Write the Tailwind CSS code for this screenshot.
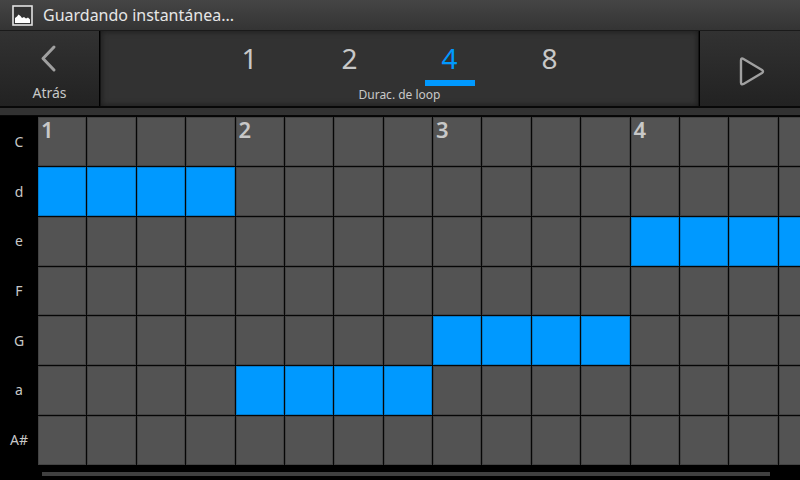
<!DOCTYPE html>
<html lang="es">
<head>
  <meta charset="UTF-8" />
  <meta name="viewport" content="width=device-width, initial-scale=1.0" />
  <title>Secuenciador</title>
  <script src="https://cdn.jsdelivr.net/npm/@tailwindcss/browser@4"></script>
</head>
<body class="h-screen flex flex-col overflow-hidden bg-black font-['Noto_Sans',sans-serif] text-[#c8c8c8]">
  <!-- Barra de estado -->
  <header class="flex items-center gap-2.5 h-[31px] shrink-0 px-3 bg-linear-to-b from-[#454545] to-[#343434] border-b border-[#1a1a1a] text-[#e6e6e6]">
    <svg class="w-[21px] h-[21px]" viewBox="0 0 21 21" fill="none">
      <rect x="1" y="1" width="19" height="19" fill="#333" stroke="#e2e2e2" stroke-width="1.6" />
      <path d="M3 18V13L5 11.500L6.500 9.500L8.500 11L10 13L12 12L14 13.500L16 12.500L18 14.500V18Z" fill="#fff" />
    </svg>
    <p class="text-base leading-6">Guardando instantánea...</p>
  </header>

  <nav class="flex h-[75px] shrink-0 bg-linear-to-b from-[#323232] to-[#222222]">
    <button type="button" class="flex flex-col items-center w-25 pt-3 border-r border-black text-sm leading-5">
      <svg class="w-5 h-[30px] mb-2.5" viewBox="0 0 20 30" fill="none" stroke="#a0a0a0" stroke-width="3" stroke-linecap="round" stroke-linejoin="round">
        <path d="M14 4L3 15.500L14 27" />
      </svg>
      Atrás
    </button>

    <div role="radiogroup" aria-labelledby="loopLabel" class="flex-1 flex flex-col items-center border-x border-[#151515] bg-[#323232] shadow-[inset_0_0_6px_#1a1a1a]">
      <div class="flex pt-[7px]">
        <label class="flex flex-col items-center w-25 text-[28px] leading-10">
          <input type="radio" name="loop" value="1" class="peer sr-only">
          <span class="peer-checked:text-[#0099ff]">1</span>
          <span class="w-[50px] h-1.5 mt-0.5 peer-checked:bg-[#0099ff]"></span>
        </label>
        <label class="flex flex-col items-center w-25 text-[28px] leading-10">
          <input type="radio" name="loop" value="2" class="peer sr-only">
          <span class="peer-checked:text-[#0099ff]">2</span>
          <span class="w-[50px] h-1.5 mt-0.5 peer-checked:bg-[#0099ff]"></span>
        </label>
        <label class="flex flex-col items-center w-25 text-[28px] leading-10">
          <input type="radio" name="loop" value="4" class="peer sr-only" checked>
          <span class="peer-checked:text-[#0099ff]">4</span>
          <span class="w-[50px] h-1.5 mt-0.5 peer-checked:bg-[#0099ff]"></span>
        </label>
        <label class="flex flex-col items-center w-25 text-[28px] leading-10">
          <input type="radio" name="loop" value="8" class="peer sr-only">
          <span class="peer-checked:text-[#0099ff]">8</span>
          <span class="w-[50px] h-1.5 mt-0.5 peer-checked:bg-[#0099ff]"></span>
        </label>
      </div>
      <p id="loopLabel" class="text-xs leading-4.5">Durac. de loop</p>
    </div>

    <button type="button" aria-label="Reproducir" class="flex items-center justify-center w-[101px] pl-1 pt-1 border-l border-black">
      <svg class="w-7 h-8" viewBox="0 0 28 32" fill="#1f1f1f" stroke="#a0a0a0" stroke-width="2.4" stroke-linejoin="round">
        <path d="M3 5.500Q3 2.500 5.500 4L24 15Q26 16.500 24 18L5.500 29Q3 30 3 27.500Z" />
      </svg>
    </button>
  </nav>

  <div class="h-2.5 shrink-0 bg-[#323232] border-t-2 border-b border-[#080808]"></div>

  <!-- Rejilla de notas -->
  <main class="flex-1 flex min-h-0 pb-[15px]">
    <div id="notes" class="grid grid-rows-7 w-[38px] shrink-0 pt-px"></div>
    <div class="flex-1 min-w-0">
      <div id="grid" class="grid grid-cols-16 grid-rows-7 w-[790px] h-full"></div>
    </div>
  </main>

  <footer class="h-0 shrink-0 relative">
    <div class="absolute bottom-1 left-[42px] right-[30px] h-1 bg-[#404040]"></div>
  </footer>

  <script>
    const notes = ['C', 'd', 'e', 'F', 'G', 'a', 'A#'];
    const steps = 16;
    // primera columna y largo de cada nota
    const pattern = {
      'd': [0, 4],
      'a': [4, 4],
      'G': [8, 4],
      'e': [12, 4],
    };

    function renderGrid() {
      const labels = document.getElementById('notes');
      const grid = document.getElementById('grid');
      notes.forEach((note, row) => {
        const label = document.createElement('div');
        label.className = 'flex items-center justify-center text-sm';
        label.innerText = note;
        labels.appendChild(label);

        for (let col = 0; col < steps; col++) {
          const cell = document.createElement('button');
          const range = pattern[note];
          const on = range && col >= range[0] && col < range[0] + range[1];
          cell.type = 'button';
          cell.className = 'flex items-start pl-[3px] border-r border-t border-[#060606] bg-[#535353] aria-pressed:bg-[#0099ff] shadow-[inset_0_0_0_1px_#00000030] text-[22px] leading-6 font-semibold';
          cell.setAttribute('aria-pressed', on ? 'true' : 'false');
          cell.setAttribute('aria-label', `${note} ${col + 1}`);
          if (row === 0 && col % 4 === 0) {
            cell.innerText = col / 4 + 1;
          }
          cell.onclick = () => {
            const pressed = cell.getAttribute('aria-pressed') === 'true';
            cell.setAttribute('aria-pressed', pressed ? 'false' : 'true');
          };
          grid.appendChild(cell);
        }
      });
    }

    renderGrid();
  </script>
</body>
</html>
